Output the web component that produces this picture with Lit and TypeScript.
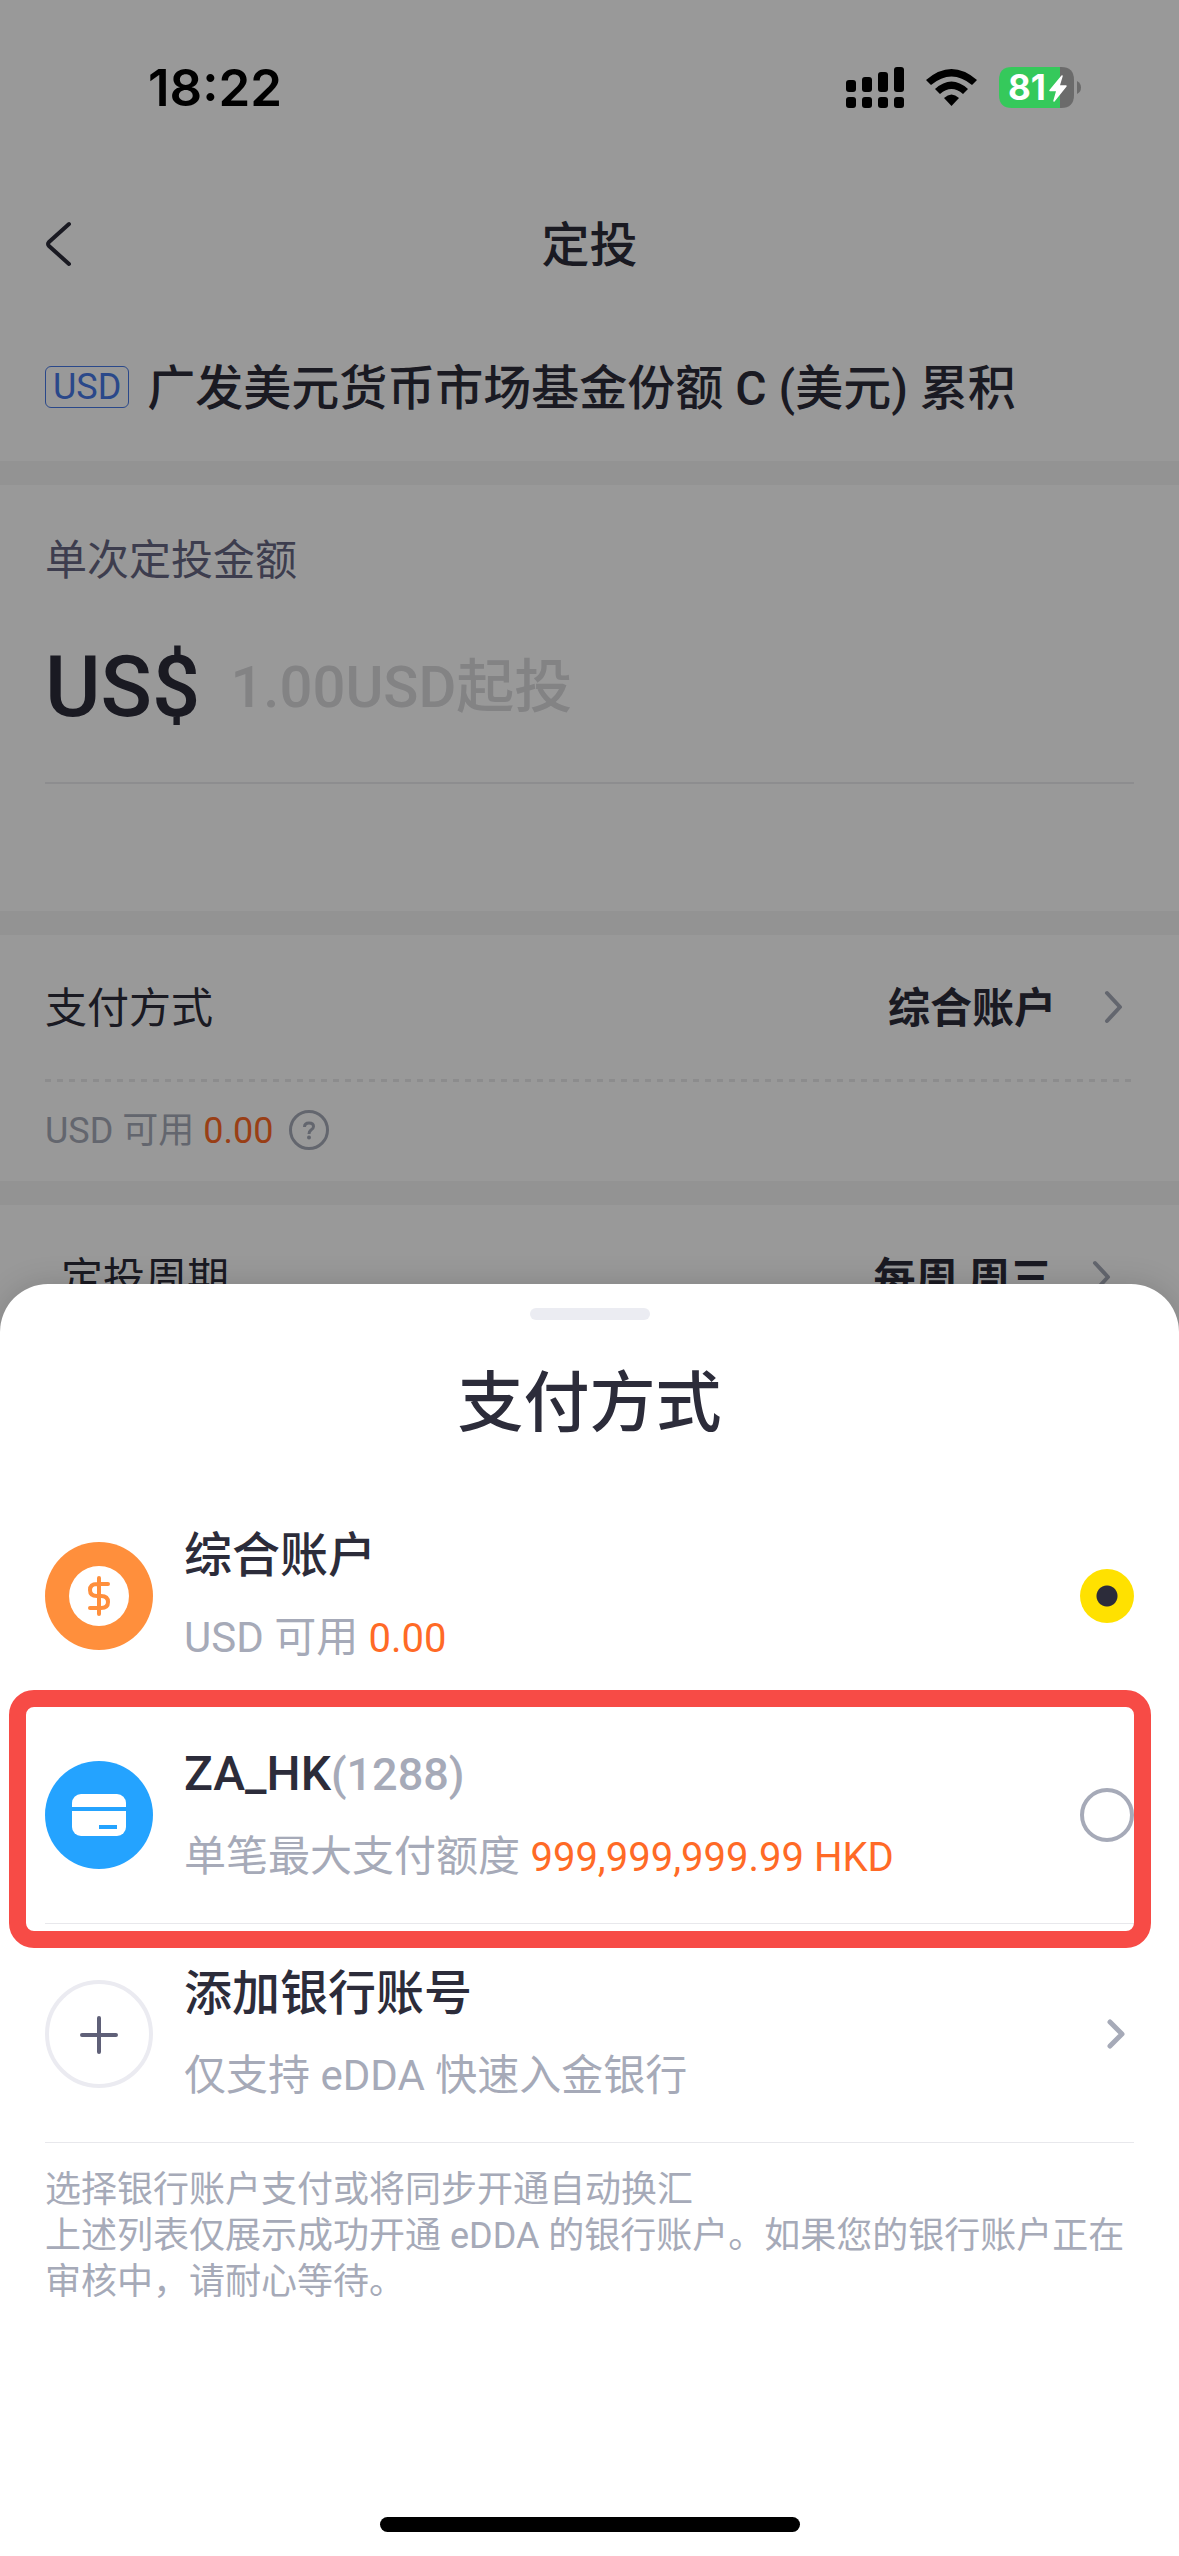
import { LitElement, html, css, svg } from "lit";
import { customElement, state } from "lit/decorators.js";

const chevron = svg`<path d="M3 3 L16 17 L3 31" fill="none" stroke="currentColor" stroke-width="4" stroke-linecap="round" stroke-linejoin="round"/>`;

@customElement("status-bar")
export class StatusBar extends LitElement {
  static styles = css`
    :host {
      display: flex;
      justify-content: space-between;
      align-items: center;
      height: 176px;
      padding: 0 98px 0 148px;
      box-sizing: border-box;
      color: #000;
    }
    .time {
      font: 600 51px/60px Inter, "Liberation Sans", sans-serif;
    }
    .icons {
      display: flex;
      align-items: center;
      gap: 22px;
    }
    svg {
      display: block;
    }
    .level {
      font: 700 35px Inter, "Liberation Sans", sans-serif;
    }
  `;

  render() {
    return html`
      <span class="time">18:22</span>
      <div class="icons">
        <svg width="58" height="42" viewBox="0 0 58 42" aria-hidden="true">
          ${[0, 1, 2, 3].map((i) => {
            const top = [13, 10, 5, 0][i];
            return svg`<rect x=${i * 16} y=${top} width="10" height=${25 - top} rx="3"/>
              <rect x=${i * 16} y="30" width="10" height="11" rx="3"/>`;
          })}
        </svg>
        <svg width="51" height="42" viewBox="0 0 51 42" aria-hidden="true">
          <path d="M0 13 Q25.500 -9 51 13 L46 18 Q25.500 1 5 18 Z"/>
          <path d="M9 22 Q25.500 7 42 22 L37 27 Q25.500 17 14 27 Z"/>
          <path d="M18 31 Q25.500 24 33 31 L25.500 39 Z"/>
        </svg>
        <svg width="82" height="42" viewBox="0 0 82 42" aria-hidden="true">
          <path d="M13 0 H61 V41 H13 Q0 41 0 28 V13 Q0 0 13 0 Z" fill="#35c95b"/>
          <path d="M61 0 H62 Q75 0 75 13 V28 Q75 41 62 41 H61 Z" fill="#6b6b6b"/>
          <path d="M78 14 Q82 16 82 20.500 Q82 25 78 27 Z" fill="#6b6b6b"/>
          <text class="level" x="9" y="33" fill="#fff">81</text>
          <path d="M63 9 L51 23.500 H58 L55 34 L67 19 H60 Z" fill="#fff" stroke="#fff" stroke-width="1.500" stroke-linejoin="round"/>
        </svg>
      </div>
    `;
  }
}

@customElement("plan-page")
export class PlanPage extends LitElement {
  static styles = css`
    :host {
      display: block;
      background: #fff;
      color: #2c2c3a;
      padding-top: 176px;
    }
    button,
    input {
      font: inherit;
      color: inherit;
      background: none;
      border: 0;
      padding: 0;
      margin: 0;
    }
    svg {
      display: block;
      flex: none;
    }
    .nav {
      display: grid;
      grid-template-columns: 1fr auto 1fr;
      align-items: center;
      height: 136px;
      padding: 0 45px;
    }
    h1,
    h2 {
      margin: 0;
      padding-top: 4px;
      font-size: 48px;
      line-height: 72px;
      font-weight: 500;
    }
    .back {
      justify-self: start;
    }
    .fund {
      display: flex;
      align-items: center;
      gap: 18px;
      height: 149px;
      padding: 0 45px;
    }
    .tag {
      border: 1px solid #4678e6;
      border-radius: 6px;
      padding: 0 7px;
      color: #4678e6;
      font-size: 36px;
      line-height: 40px;
    }
    .band {
      height: 24px;
      background: #f5f5f6;
    }
    .amount {
      padding: 46px 45px 127px;
    }
    .amount label {
      display: block;
      font-size: 42px;
      line-height: 60px;
      color: #666782;
    }
    .field {
      display: flex;
      align-items: center;
      gap: 30px;
      height: 191px;
      border-bottom: 2px solid #ebebee;
    }
    .field span {
      font-size: 85px;
      font-weight: 500;
    }
    .field input {
      flex: 1;
      min-width: 0;
      font-size: 58px;
      font-weight: 500;
    }
    .field input::placeholder {
      color: #dadadd;
      opacity: 1;
    }
    .row {
      display: flex;
      align-items: center;
      width: 100%;
      height: 144px;
      padding: 0 55px 0 45px;
      font-size: 42px;
      line-height: 60px;
    }
    .row span,
    .row b {
      padding-top: 4px;
    }
    .row b {
      margin-left: auto;
      margin-right: 48px;
      font-weight: 700;
    }
    .row.inset {
      padding: 0 67px 0 61px;
    }
    .row.inset b {
      margin-right: 40px;
    }
    .row svg {
      color: #a6aab8;
    }
    .dots {
      height: 3px;
      margin: 0 45px;
      background: repeating-linear-gradient(90deg, #e9e9ec 0 6px, transparent 6px 12px);
    }
    .balance {
      display: flex;
      align-items: center;
      gap: 16px;
      box-sizing: border-box;
      height: 99px;
      padding: 0 45px 4px;
      font-size: 36px;
      color: #a6aab8;
    }
    .balance span {
      padding-bottom: 6px;
    }
    .balance em {
      font-style: normal;
      color: #ff6a26;
    }
  `;

  render() {
    return html`
      <header class="nav">
        <button class="back" aria-label="返回">
          <svg width="28" height="46" viewBox="0 0 28 46">
            <path d="M24 3 L4 21 Q2 23 4 25 L24 43" fill="none" stroke="currentColor" stroke-width="4" stroke-linecap="round"/>
          </svg>
        </button>
        <h1>定投</h1>
      </header>
      <div class="fund">
        <span class="tag">USD</span>
        <h2>广发美元货币市场基金份额 C (美元) 累积</h2>
      </div>
      <div class="band"></div>
      <section class="amount">
        <label for="amount">单次定投金额</label>
        <div class="field">
          <span>US$</span>
          <input id="amount" type="text" inputmode="decimal" placeholder="1.00USD起投" />
        </div>
      </section>
      <div class="band"></div>
      <button class="row">
        <span>支付方式</span><b>综合账户</b>
        <svg width="20" height="34" viewBox="0 0 20 34">${chevron}</svg>
      </button>
      <div class="dots"></div>
      <div class="balance">
        <span>USD 可用 <em>0.00</em></span>
        <button aria-label="说明">
          <svg width="40" height="40" viewBox="0 0 40 40">
            <circle cx="20" cy="20" r="18.500" fill="none" stroke="currentColor" stroke-width="3"/>
            <path d="M15.500 17 Q15.500 13 20 13 Q24.500 13 24.500 16.500 Q24.500 18.500 22 20 Q20 21.500 20 24" fill="none" stroke="currentColor" stroke-width="3"/>
            <circle cx="20" cy="27.500" r="2" fill="currentColor"/>
          </svg>
        </button>
      </div>
      <div class="band"></div>
      <button class="row inset">
        <span>定投周期</span><b>每周 周三</b>
        <svg width="20" height="34" viewBox="0 0 20 34">${chevron}</svg>
      </button>
    `;
  }
}

@customElement("payment-sheet")
export class PaymentSheet extends LitElement {
  @state() private selected = "account";

  static styles = css`
    :host {
      display: flex;
      flex-direction: column;
      align-items: stretch;
      box-sizing: border-box;
      background: #fff;
      border-radius: 48px 48px 0 0;
      box-shadow: 0 0 30px rgba(0, 0, 0, 0.15);
      color: #2c2c3a;
      padding: 24px 0;
    }
    svg {
      display: block;
      flex: none;
    }
    .handle {
      align-self: center;
      width: 120px;
      height: 12px;
      border-radius: 6px;
      background: #ebecf2;
    }
    h2 {
      margin: 34px 0 32px;
      text-align: center;
      font-size: 66px;
      line-height: 100px;
      font-weight: 500;
    }
    .list {
      display: flex;
      flex-direction: column;
      padding: 0 45px;
    }
    .option {
      position: relative;
      display: flex;
      align-items: center;
      gap: 31px;
      box-sizing: border-box;
      width: 100%;
      min-height: 219px;
      margin: 0;
      padding: 2px 0 0;
      border: 0;
      border-bottom: 1px solid #e8e8ec;
      background: none;
      color: inherit;
      font: inherit;
      text-align: left;
    }
    .copy {
      flex: 1;
      display: flex;
      flex-direction: column;
      padding-top: 4px;
    }
    .name {
      font-size: 48px;
      line-height: 80px;
      font-weight: 500;
    }
    .name i,
    .detail {
      color: #a6aab8;
      font-style: normal;
    }
    .name i {
      font-size: 45px;
    }
    .detail {
      font-size: 42px;
      line-height: 84px;
    }
    .detail em {
      font-style: normal;
      font-size: 40px;
      color: #ff6a26;
    }
    input {
      appearance: none;
      flex: none;
      width: 54px;
      height: 54px;
      margin: 0;
      border: 4px solid #a6aab8;
      border-radius: 50%;
    }
    input:checked {
      border: 0;
      background: radial-gradient(circle, #2c2c3a 0 10px, #ffe100 11px);
    }
    .arrow {
      margin-right: 8px;
      color: #a6aab8;
    }
    .highlight {
      position: absolute;
      top: -15px;
      bottom: -25px;
      left: -36px;
      right: -17px;
      border: 17px solid #f74b46;
      border-radius: 25px;
      pointer-events: none;
      z-index: 1;
    }
    .note {
      margin: 24px 45px 212px;
      font-size: 36px;
      line-height: 46px;
      color: #a6aab8;
    }
    .home {
      align-self: center;
      width: 420px;
      height: 15px;
      border-radius: 8px;
      background: #000;
    }
  `;

  private radio(value: string) {
    return html`<input
      type="radio"
      name="payment"
      .checked=${this.selected === value}
      @change=${() => (this.selected = value)}
    />`;
  }

  render() {
    return html`
      <div class="handle"></div>
      <h2>支付方式</h2>
      <div class="list">
        <label class="option">
          <svg width="108" height="108" viewBox="0 0 108 108">
            <circle cx="54" cy="54" r="54" fill="#ff8f3c"/>
            <circle cx="54" cy="54" r="30" fill="#fff"/>
            <path d="M54 36 V72 M63 42 H52 Q45 42 45 48 Q45 54 52 54 H56 Q63 54 63 60 Q63 66 56 66 H45" fill="none" stroke="#ff8f3c" stroke-width="4" stroke-linecap="round"/>
          </svg>
          <span class="copy">
            <span class="name">综合账户</span>
            <span class="detail">USD 可用 <em>0.00</em></span>
          </span>
          ${this.radio("account")}
        </label>
        <label class="option">
          <svg width="108" height="108" viewBox="0 0 108 108">
            <circle cx="54" cy="54" r="54" fill="#24a3ff"/>
            <rect x="27" y="33" width="54" height="42" rx="9" fill="#fff"/>
            <path d="M27 46 H81 V50 H27 Z M54 64 H72 V68 H54 Z" fill="#24a3ff"/>
          </svg>
          <span class="copy">
            <span class="name">ZA_HK<i>(1288)</i></span>
            <span class="detail">单笔最大支付额度 <em>999,999,999.99 HKD</em></span>
          </span>
          ${this.radio("bank")}
          <span class="highlight"></span>
        </label>
        <button class="option">
          <svg width="108" height="108" viewBox="0 0 108 108">
            <circle cx="54" cy="54" r="52" fill="none" stroke="#ebebf1" stroke-width="4"/>
            <path d="M54 38 V72 M37 55 H71" stroke="#5f6078" stroke-width="4" stroke-linecap="round"/>
          </svg>
          <span class="copy">
            <span class="name">添加银行账号</span>
            <span class="detail">仅支持 eDDA 快速入金银行</span>
          </span>
          <svg class="arrow" width="20" height="32" viewBox="0 0 20 32">
            <path d="M4 4 L16 16 L4 28" fill="none" stroke="currentColor" stroke-width="5" stroke-linecap="round" stroke-linejoin="round"/>
          </svg>
        </button>
      </div>
      <p class="note">
        选择银行账户支付或将同步开通自动换汇<br />
        上述列表仅展示成功开通 eDDA 的银行账户。如果您的银行账户正在审核中，请耐心等待。
      </p>
      <div class="home"></div>
    `;
  }
}

@customElement("app-root")
export class AppRoot extends LitElement {
  static styles = css`
    :host {
      display: grid;
      grid-template: minmax(100vh, auto) / minmax(0, 1fr);
      overflow: hidden;
      background: #fff;
      font-family: Roboto, "Noto Sans CJK SC", sans-serif;
    }
    plan-page,
    .scrim,
    status-bar,
    payment-sheet {
      grid-area: 1 / 1;
    }
    .scrim {
      background: rgba(0, 0, 0, 0.4);
      z-index: 1;
    }
    status-bar {
      align-self: start;
      z-index: 2;
    }
    payment-sheet {
      align-self: end;
      z-index: 2;
    }
  `;

  render() {
    return html`
      <plan-page lang="zh-CN"></plan-page>
      <div class="scrim"></div>
      <status-bar></status-bar>
      <payment-sheet lang="zh-CN"></payment-sheet>
    `;
  }
}
